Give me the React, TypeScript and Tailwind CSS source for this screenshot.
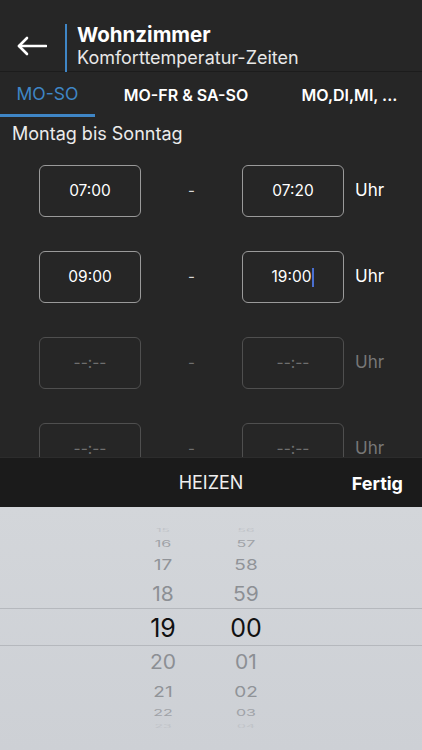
import React from "react";

const font = { fontFamily: "Inter, 'Noto Sans', sans-serif" };

type Row = { a: string; b: string; dim?: boolean; cursor?: boolean };
const rows: Row[] = [
  { a: "07:00", b: "07:20" },
  { a: "09:00", b: "19:00", cursor: true },
  { a: "--:--", b: "--:--", dim: true },
  { a: "--:--", b: "--:--", dim: true },
];

type Item = { h: number; size: number; sy: number; color: string };
const itemsSpec: Item[] = [
  { h: 10, size: 14, sy: 0.3, color: "#c0c3c8" },
  { h: 17, size: 16, sy: 0.55, color: "#9fa2a7" },
  { h: 26, size: 19, sy: 0.78, color: "#909398" },
  { h: 32, size: 21, sy: 0.93, color: "#8c8f94" },
  { h: 36, size: 25, sy: 1, color: "#111111" },
  { h: 33, size: 21, sy: 0.93, color: "#8c8f94" },
  { h: 26, size: 19, sy: 0.78, color: "#909398" },
  { h: 16, size: 16, sy: 0.55, color: "#9fa2a7" },
  { h: 11, size: 14, sy: 0.3, color: "#c0c3c8" },
];
const hours = ["15", "16", "17", "18", "19", "20", "21", "22", "23"];
const mins = ["56", "57", "58", "59", "00", "01", "02", "03", "04"];

function Column({ labels }: { labels: string[] }) {
  return (
    <div className="flex w-[60px] flex-col items-center">
      {labels.map((l, i) => {
        const s = itemsSpec[i];
        return (
          <div
            key={i}
            className="flex w-full items-center justify-center leading-none"
            style={{ height: s.h, fontSize: s.size, color: s.color, transform: `scaleY(${s.sy})` }}
          >
            {l}
          </div>
        );
      })}
    </div>
  );
}

export default function App() {
  return (
    <div className="relative h-[750px] w-[422px] overflow-hidden bg-[#262626] text-white" style={font}>
      {/* Header */}
      <div className="flex h-[72px] items-center border-b border-[#1c1c1c] pt-[2px]">
        <div className="flex w-[65px] items-center pl-[17px] pt-[18px]">
          <svg width="30" height="20" viewBox="0 0 30 20" fill="none">
            <path d="M2 10 H29" stroke="white" strokeWidth="2.6" strokeLinecap="round" />
            <path d="M10 2 L2 10 L10 18" stroke="white" strokeWidth="2.6" strokeLinecap="round" strokeLinejoin="round" />
          </svg>
        </div>
        <div className="mt-[22px] flex h-[48px] items-stretch">
          <div className="w-[2px] bg-[#3f86c6]" />
          <div className="flex flex-col justify-center pb-[4px] pl-[10px]">
            <div className="text-[20.5px] font-bold leading-[24px]">Wohnzimmer</div>
            <div className="text-[18px] leading-[21px] text-[#e8e8e8]">Komforttemperatur-Zeiten</div>
          </div>
        </div>
      </div>
      {/* Tabs */}
      <div className="flex h-[45px]">
        <div className="flex w-[95px] flex-col">
          <div className="flex flex-1 items-center justify-center pt-[3px] text-[17.5px] text-[#3f86c6]">MO-SO</div>
          <div className="h-[3px] bg-[#3f86c6]" />
        </div>
        <div className="flex w-[182px] items-center justify-center text-[16px] font-semibold">MO-FR &amp; SA-SO</div>
        <div className="flex flex-1 items-center justify-center text-[16px] font-semibold">MO,DI,MI, ...</div>
      </div>
      {/* Content */}
      <div className="h-[340px] overflow-hidden">
        <div className="pl-[12px] pt-[4px] text-[18px] leading-[26px] text-[#ececec]">Montag bis Sonntag</div>
        <div className="flex flex-col gap-[34px] pt-[18px]">
          {rows.map((r, i) => {
            const border = r.dim ? "border-[#4f4f4f]" : "border-[#9a9a9a]";
            const txt = r.dim ? "text-[#6f6f6f]" : "text-white";
            return (
              <div key={i} className="flex items-center pl-[39px]">
                <div className={`flex h-[52px] w-[102px] items-center justify-center rounded-[6px] border ${border} ${txt} text-[15.5px]`}>
                  {r.a}
                </div>
                <div className={`flex w-[101px] justify-center text-[15px] ${r.dim ? "text-[#6f6f6f]" : "text-[#d8d8d8]"}`}>-</div>
                <div className={`flex h-[52px] w-[102px] items-center justify-center rounded-[6px] border ${border} ${txt} text-[15.5px]`}>
                  <span>{r.b}</span>
                  {r.cursor && <span className="ml-[1px] inline-block h-[19px] w-[2px] bg-[#4a6fd0]" />}
                </div>
                <div className={`pl-[11px] text-[17px] ${r.dim ? "text-[#777777]" : "text-white"}`}>Uhr</div>
              </div>
            );
          })}
        </div>
      </div>
      {/* Toolbar */}
      <div className="relative flex h-[50px] items-center justify-center border-t border-[#2c2c2c] bg-[#1b1b1b]">
        <div className="text-[18px] text-[#eeeeee]">HEIZEN</div>
        <div className="absolute right-[19px] top-[12px] text-[18px] font-bold">Fertig</div>
      </div>
      {/* Picker */}
      <div className="relative h-[243px] bg-gradient-to-b from-[#d3d6da] to-[#cdd0d5] pt-[18px]">
        <div className="absolute left-0 right-0 top-[101px] h-[38px] border-y border-[#b5b8bd]" />
        <div className="relative flex gap-[23px] pl-[133px]">
          <Column labels={hours} />
          <Column labels={mins} />
        </div>
      </div>
    </div>
  );
}
